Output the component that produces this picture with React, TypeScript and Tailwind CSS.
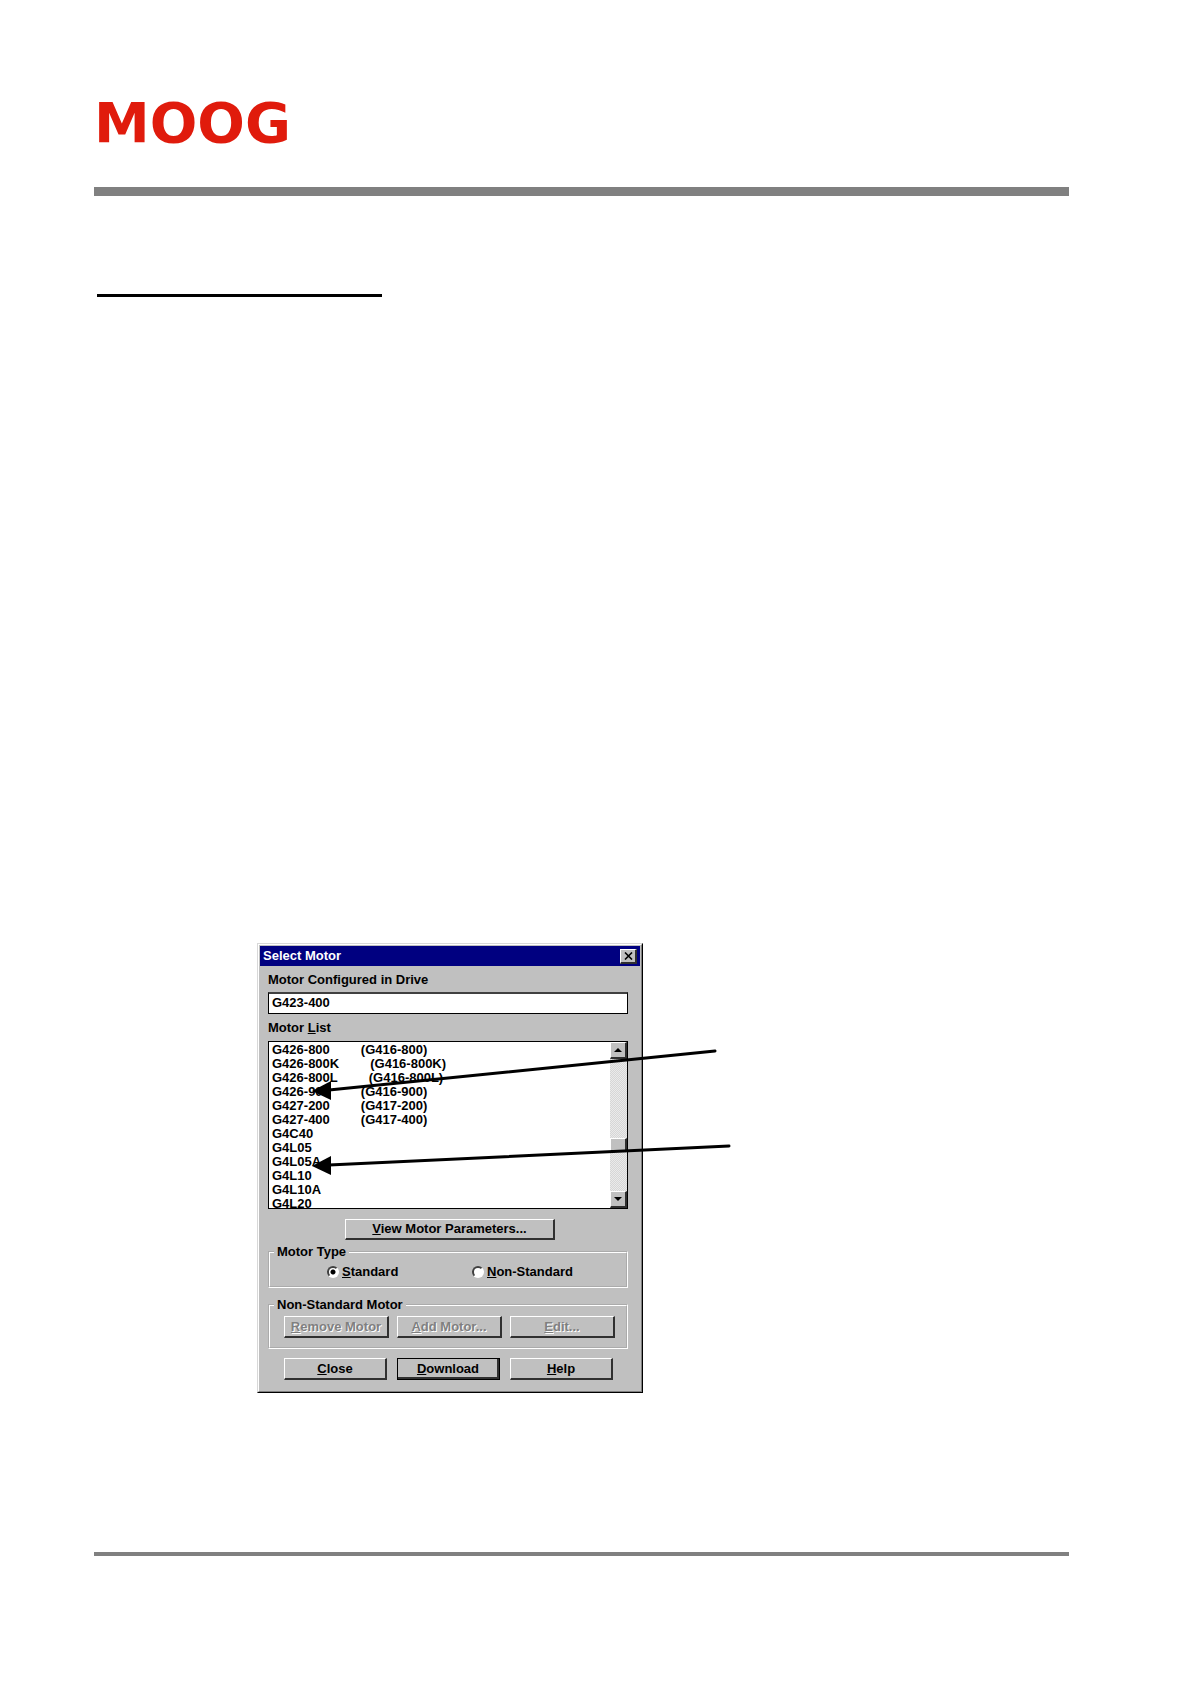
import React, { useState } from "react";

type Motor = { name: string; alias?: string };

const motors: Motor[] = [
  { name: "G426-800", alias: "(G416-800)" },
  { name: "G426-800K", alias: "(G416-800K)" },
  { name: "G426-800L", alias: "(G416-800L)" },
  { name: "G426-900", alias: "(G416-900)" },
  { name: "G427-200", alias: "(G417-200)" },
  { name: "G427-400", alias: "(G417-400)" },
  { name: "G4C40" },
  { name: "G4L05" },
  { name: "G4L05A" },
  { name: "G4L10" },
  { name: "G4L10A" },
  { name: "G4L20" },
];

const raised =
  "border-t border-l border-r-2 border-b-2 border-t-white border-l-white border-r-[#303030] border-b-[#303030] bg-[#c0c0c0]";

const radioStyle =
  "h-3 w-3 appearance-none rounded-full border-2 border-t-[#404040] border-l-[#404040] border-r-white border-b-white bg-white checked:bg-[radial-gradient(circle,#000_2px,#fff_3px)]";

type ButtonProps = {
  hotkey: string;
  children: React.ReactNode;
  className: string;
  disabled?: boolean;
};

const DialogButton: React.FC<ButtonProps> = ({ hotkey, children, className, disabled }) => {
  return (
    <button
      type="button"
      disabled={disabled}
      className={`flex items-center justify-center font-bold ${raised} ${className} disabled:text-[#808080] disabled:[text-shadow:1px_1px_0_#fff]`}
    >
      <span>
        <u>{hotkey}</u>
        {children}
      </span>
    </button>
  );
};

const ScrollBar: React.FC = () => {
  return (
    <div className="flex w-[17px] shrink-0 flex-col bg-[#e0e0e0] bg-[repeating-conic-gradient(#d6d6d6_0_25%,#eaeaea_0_50%)] bg-[length:2px_2px]">
      <button type="button" aria-label="Scroll up" className={`flex h-[17px] items-center justify-center ${raised}`}>
        <svg width="8" height="4" viewBox="0 0 8 4">
          <path d="M4 0L8 4H0Z" />
        </svg>
      </button>
      <div className="grow" />
      <div className={`h-[14px] ${raised}`} />
      <div className="h-[39px]" />
      <button type="button" aria-label="Scroll down" className={`flex h-[17px] items-center justify-center ${raised}`}>
        <svg width="8" height="4" viewBox="0 0 8 4">
          <path d="M0 0H8L4 4Z" />
        </svg>
      </button>
    </div>
  );
};

const SelectMotorDialog: React.FC = () => {
  const [configured, setConfigured] = useState("G423-400");
  const [motorType, setMotorType] = useState("standard");

  return (
    <div
      role="dialog"
      aria-labelledby="dialog-title"
      className="border border-t-[#d8d8d8] border-l-[#d8d8d8] border-r-black border-b-black bg-[#c0c0c0] text-[13px] leading-4 font-bold text-black"
    >
      <div className="border border-t-white border-l-white border-r-[#808080] border-b-[#808080] p-px">
        <div className="flex h-5 items-center justify-between bg-[#000080] px-[3px]">
          <h2 id="dialog-title" className="text-white">
            Select Motor
          </h2>
          <button type="button" aria-label="Close window" className={`flex h-[15px] w-[17px] items-center justify-center ${raised}`}>
            <svg width="9" height="8" viewBox="0 0 9 8" fill="none" stroke="#000" strokeWidth="1.6">
              <path d="M1 0.5L8 7.5M8 0.5L1 7.5" />
            </svg>
          </button>
        </div>

        <div className="pt-[6px] pr-3 pb-[10px] pl-2">
          <label htmlFor="configured" className="block">
            Motor Configured in Drive
          </label>
          <input
            id="configured"
            type="text"
            value={configured}
            onChange={(e) => setConfigured(e.target.value)}
            className="mt-1 block h-[22px] w-full border border-t-2 border-t-[#404040] border-r-black border-b-black border-l-black bg-white px-[3px] pb-[2px] font-bold outline-none"
          />

          <div id="motor-list-label" className="mt-[6px]">
            Motor <u>L</u>ist
          </div>
          <div className="mt-[5px] flex h-[168px] border border-black bg-white">
            <ul role="listbox" aria-labelledby="motor-list-label" className="grow overflow-hidden pt-px pl-[3px] leading-[14px]">
              {motors.map((motor) => (
                <li key={motor.name} role="option" aria-selected={false} className="flex gap-[31px]">
                  <span>{motor.name}</span>
                  {motor.alias && <span>{motor.alias}</span>}
                </li>
              ))}
            </ul>
            <ScrollBar />
          </div>

          <DialogButton hotkey="V" className="mt-[10px] ml-[77px] h-[21px] w-[210px]">
            iew Motor Parameters...
          </DialogButton>

          <fieldset className="mt-[5px] h-[43px] border-2 border-white px-1 [border-style:groove]">
            <legend className="px-[3px] leading-[14px]">Motor Type</legend>
            <div className="mt-[5px] flex pl-[53px]">
              <label className="flex w-[145px] items-center gap-[3px]">
                <input
                  type="radio"
                  name="motorType"
                  checked={motorType === "standard"}
                  onChange={() => setMotorType("standard")}
                  className={radioStyle}
                />
                <span>
                  <u>S</u>tandard
                </span>
              </label>
              <label className="flex items-center gap-[3px]">
                <input
                  type="radio"
                  name="motorType"
                  checked={motorType === "non-standard"}
                  onChange={() => setMotorType("non-standard")}
                  className={radioStyle}
                />
                <span>
                  <u>N</u>on-Standard
                </span>
              </label>
            </div>
          </fieldset>

          <fieldset className="mt-[10px] h-[51px] border-2 border-white px-1 [border-style:groove]">
            <legend className="px-[3px] leading-[14px]">Non-Standard Motor</legend>
            <div className="mt-1 flex gap-2 pl-[10px]">
              <DialogButton hotkey="R" disabled className="h-[22px] w-[105px]">
                emove Motor
              </DialogButton>
              <DialogButton hotkey="A" disabled className="h-[22px] w-[105px]">
                dd Motor...
              </DialogButton>
              <DialogButton hotkey="E" disabled className="h-[22px] w-[105px]">
                dit...
              </DialogButton>
            </div>
          </fieldset>

          <div className="mt-[9px] flex gap-[10px] pl-4">
            <DialogButton hotkey="C" className="h-[22px] w-[103px]">
              lose
            </DialogButton>
            <DialogButton hotkey="D" className="h-[22px] w-[103px] shadow-[inset_-1px_-1px_0_#303030] outline -outline-offset-1 outline-black">
              ownload
            </DialogButton>
            <DialogButton hotkey="H" className="h-[22px] w-[103px]">
              elp
            </DialogButton>
          </div>
        </div>
      </div>
    </div>
  );
};

// callout arrows that reach over the dialog from the right margin
const Arrows: React.FC = () => {
  return (
    <svg
      className="pointer-events-none absolute top-0 left-0"
      width="480"
      height="450"
      viewBox="0 0 480 450"
      stroke="#000"
      strokeWidth="3"
      strokeLinecap="round"
    >
      <path d="M458 108L72 147" />
      <path d="M55 148L74 138V157Z" stroke="none" />
      <path d="M472 203L72 222" />
      <path d="M55 223L74 213V232Z" stroke="none" />
    </svg>
  );
};

const App: React.FC = () => {
  return (
    <div className="min-h-screen bg-white pt-[87px] pr-[121px] pb-32 pl-[94px] font-['Liberation_Sans',Arial,sans-serif]">
      <header>
        <div className="font-['DejaVu_Sans',sans-serif] text-[56px] leading-[72px] font-bold text-[#e01b0c]">MOOG</div>
        <div className="mt-7 h-[9px] bg-[#808080]" />
      </header>

      <main>
        <div className="mt-[98px] ml-[3px] h-[3px] w-[285px] bg-black" />
        <div className="relative mt-[646px] ml-[163px] w-[386px]">
          <SelectMotorDialog />
          <Arrows />
        </div>
      </main>

      <footer className="mt-[159px] h-1 bg-[#808080]" />
    </div>
  );
};

export default App;
